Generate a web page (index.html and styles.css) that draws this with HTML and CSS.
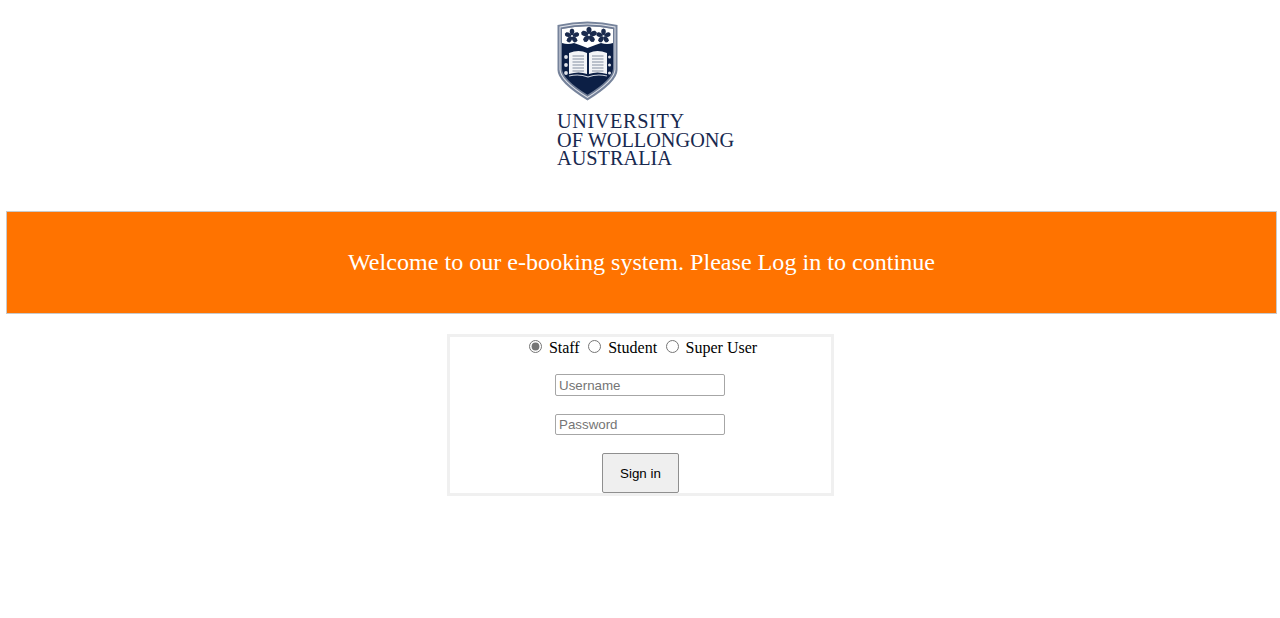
FILE: index.html
```html
<!DOCTYPE html>
<html lang="en">
<head>
<meta charset="utf-8">
<title>e-booking system</title>
<link rel="stylesheet" href="styles.css">
</head>
<body>
<header class="logo-area">
  <div class="logo">
    <svg class="crest" width="62" height="81" viewBox="0 0 62 81" xmlns="http://www.w3.org/2000/svg" aria-hidden="true">
      <defs>
        <g id="flower">
          <path id="petal" d="M0 0 Q-3.200 -3 -1.800 -6.200 L0 -7.200 L1.800 -6.200 Q3.200 -3 0 0 Z"/>
          <use href="#petal" transform="rotate(72)"/>
          <use href="#petal" transform="rotate(144)"/>
          <use href="#petal" transform="rotate(216)"/>
          <use href="#petal" transform="rotate(288)"/>
          <circle r="1" fill="#dfe3ea"/>
        </g>
      </defs>
      <path d="M0.500 5 Q30.500 -2 60.500 5 L60.500 50 Q60.500 62 30.500 80.500 Q0.500 62 0.500 50 Z" fill="#76839b"/>
      <path d="M2.500 6.500 Q30.500 0.500 58.500 6.500 L58.500 49.500 Q58.500 60.500 30.500 78 Q2.500 60.500 2.500 49.500 Z" fill="#dfe2e9"/>
      <path d="M3.500 7.500 Q30.500 1.500 57.500 7.500 L57.500 49 Q57.500 60 30.500 76.800 Q3.500 60 3.500 49 Z" fill="#6f7c95"/>
      <path d="M5 9 Q30.500 3.500 56 9 L56 48.500 Q56 59 30.500 74.800 Q5 59 5 48.500 Z" fill="#0c1f45"/>
      <path d="M5 9 Q30.500 3.500 56 9 L56 23 Q50 25 44 23 Q38 25 30.500 28 Q23 25 17 23 Q11 25 5 23 Z" fill="#fff"/>
      <g fill="#1a2a4d">
        <use href="#flower" transform="translate(15 16) scale(1.050)"/>
        <use href="#flower" transform="translate(32 15) scale(1.150)"/>
        <use href="#flower" transform="translate(46.500 16) scale(1.050)"/>
      </g>
      <path d="M12 33 Q22 29 30 33 L30 54 Q22 51 12 54 Z" fill="#f3f4f7"/>
      <path d="M32 33 Q40 29 50 33 L50 54 Q40 51 32 54 Z" fill="#f3f4f7"/>
      <path d="M15.500 36 H27 M15.500 39 H27 M15.500 42 H27 M15.500 45 H27 M15.500 48 H27 M15.500 51 H27 M35 36 H46.500 M35 39 H46.500 M35 42 H46.500 M35 45 H46.500 M35 48 H46.500 M35 51 H46.500" fill="none" stroke="#a9b0bf" stroke-width="1.300"/>
      <path d="M12 56 Q22 53.500 31 57 Q40 53.500 50 56" fill="none" stroke="#cfd4de" stroke-width="1.100"/>
      <g fill="#dfe2e9">
        <circle cx="9" cy="37" r="1.900"/><circle cx="9" cy="45" r="1.900"/><circle cx="9" cy="53" r="1.900"/>
        <circle cx="52.500" cy="37" r="1.500"/><circle cx="52.500" cy="45" r="1.500"/><circle cx="52.500" cy="53" r="1.500"/>
      </g>
    </svg>
    <div class="wordmark">
      <div class="wordmark-wide">UNIVERSITY</div>
      <div>OF WOLLONGONG</div>
      <div>AUSTRALIA</div>
    </div>
  </div>
</header>

<section class="banner">
  <h1 class="banner-title">Welcome to our e-booking system. Please Log in to continue</h1>
</section>

<form class="login">
  <div class="roles">
    <input class="radio" type="radio" name="role" id="staff" checked><label class="role-label" for="staff">Staff</label>
    <input class="radio" type="radio" name="role" id="student"><label class="role-label" for="student">Student</label>
    <input class="radio" type="radio" name="role" id="super"><label class="role-label" for="super">Super User</label>
  </div>
  <input class="field" type="text" placeholder="Username">
  <input class="field" type="password" placeholder="Password">
  <button class="submit" type="button">Sign in</button>
</form>
</body>
</html>
```
FILE: styles.css
```css
* {
  box-sizing: border-box;
}

html, body {
  background: #fff;
}

body {
  margin: 0;
  padding: 0 3px 0 6px;
  height: 618px;
  overflow: hidden;
  font-family: "Liberation Serif", serif;
  color: #000;
}

.logo-area {
  height: 211px;
  padding: 20px 0 0 551px;
}

.logo {
  width: 190px;
}

.crest {
  display: block;
  filter: blur(0.3px);
}

.wordmark {
  margin-top: 11px;
  font-family: "Liberation Serif", serif;
  font-size: 20.300px;
  line-height: 18.500px;
  color: #18294f;
  white-space: nowrap;
}

.wordmark-wide {
  letter-spacing: 0.600px;
}

.banner {
  height: 103px;
  background: #ff7300;
  border: 1px solid #c9c9c9;
  display: flex;
  align-items: center;
  justify-content: center;
}

.banner-title {
  margin: 0;
  font-size: 24.100px;
  font-weight: 400;
  color: #fff;
}

.login {
  width: 387px;
  height: 162px;
  margin: 20px 0 0 441px;
  border: 3px solid #f0f0f0;
  display: flex;
  flex-direction: column;
  align-items: center;
}

.roles {
  height: 22px;
  padding-right: 3.500px;
  display: flex;
  align-items: center;
  font-size: 16px;
  white-space: nowrap;
}

.radio {
  width: 13px;
  height: 13px;
  margin: 0 7px 2px 8.500px;
  accent-color: #757575;
}

.field {
  width: 170px;
  height: 22px;
  margin: 16px 1px 0 0;
  padding: 1px 3px;
  border: 1px solid #a6a6a6;
  border-radius: 2px;
  font-family: "Liberation Sans", sans-serif;
  font-size: 13.333px;
  background: #fff;
}

.field::placeholder {
  color: #757575;
}

.field + .field {
  margin-top: 18px;
}

.submit {
  width: 77px;
  height: 41px;
  margin-top: 18px;
  padding: 0;
  border: 1px solid #8f8f8f;
  border-radius: 2px;
  background: #efefef;
  font-family: "Liberation Sans", sans-serif;
  font-size: 13.333px;
  color: #000;
}
```
